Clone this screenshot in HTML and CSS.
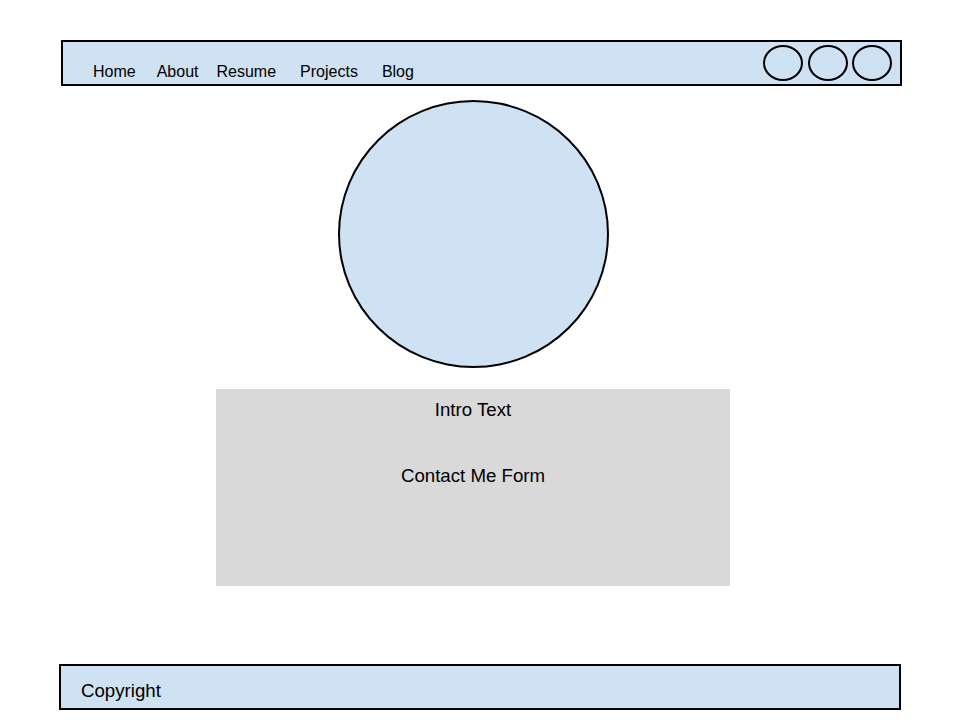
FILE: index.html
```html
<!DOCTYPE html>
<html lang="en">
<head>
<meta charset="utf-8">
<title>Home</title>
<link rel="stylesheet" href="styles.css">
</head>
<body>
<header class="topbar">
  <nav class="nav">
    <a class="nav-link" href="#">Home</a>
    <a class="nav-link nav-about" href="#">About</a>
    <a class="nav-link nav-resume" href="#">Resume</a>
    <a class="nav-link nav-projects" href="#">Projects</a>
    <a class="nav-link nav-blog" href="#">Blog</a>
  </nav>
  <div class="socials">
    <span class="social"></span>
    <span class="social"></span>
    <span class="social"></span>
  </div>
</header>
<main class="main">
  <div class="avatar"></div>
  <section class="content">
    <p class="intro">Intro Text</p>
    <p class="contact">Contact Me Form</p>
  </section>
</main>
<footer class="footer">
  <p class="copyright">Copyright</p>
</footer>
</body>
</html>
```
FILE: styles.css
```css
* {
  box-sizing: border-box;
}

body {
  margin: 0;
  background: #ffffff;
  font-family: "Liberation Sans", Arial, sans-serif;
  color: #000000;
}

.topbar {
  display: flex;
  justify-content: space-between;
  align-items: center;
  margin: 40px 0 0 61px;
  width: 841px;
  height: 46px;
  padding: 0 8px 0 30px;
  background: #cfe2f3;
  border: 2px solid #000000;
}

.nav {
  display: flex;
  align-self: flex-end;
  margin-bottom: 3px;
}

.nav-link {
  font-size: 16px;
  line-height: 18px;
  color: #000000;
  text-decoration: none;
}

.nav-about { margin-left: 21px; }
.nav-resume { margin-left: 18px; }
.nav-projects { margin-left: 24px; }
.nav-blog { margin-left: 24px; }

.socials {
  display: flex;
  gap: 4.5px;
}

.social {
  display: block;
  width: 40px;
  height: 36px;
  border: 2px solid #000000;
  border-radius: 50%;
}

.main {
  display: flex;
  flex-direction: column;
  align-items: center;
  margin-left: 216px;
  width: 514px;
}

.avatar {
  margin-top: 14px;
  width: 271px;
  height: 268px;
  border: 2px solid #000000;
  border-radius: 50%;
  background: #cfe2f3;
}

.content {
  margin-top: 21px;
  width: 514px;
  height: 197px;
  padding-top: 10px;
  background: #d9d9d9;
  text-align: center;
  font-size: 18.67px;
  line-height: 21px;
}

.intro {
  margin: 0;
}

.contact {
  margin: 45px 0 0;
}

.footer {
  margin: 78px 0 0 59px;
  width: 842px;
  height: 46px;
  padding: 14px 0 0 20px;
  background: #cfe2f3;
  border: 2px solid #000000;
}

.copyright {
  margin: 0;
  font-size: 18.67px;
  line-height: 21px;
}
```
